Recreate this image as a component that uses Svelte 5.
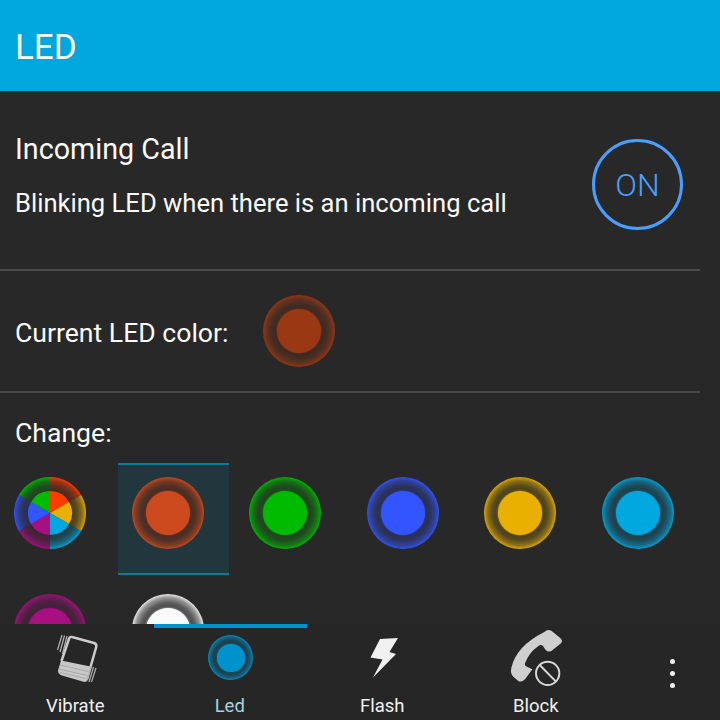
<script>
  const colors = [
    { c: '#cc4a1e', sel: true },
    { c: '#00bb00' },
    { c: '#3355ff' },
    { c: '#e9b000' },
    { c: '#00a8e0' },
    { c: '#a80f80' },
    { c: '#fafafa' }
  ];
  const wheel = ['#ff3c00', '#e9b000', '#00a8e0', '#a80f80', '#3355ff', '#00bb00'];

  function slice(i, r) {
    const a0 = ((i * 60 - 90) * Math.PI) / 180;
    const a1 = (((i + 1) * 60 - 90) * Math.PI) / 180;
    const p = (a) => `${(36 + r * Math.cos(a)).toFixed(2)} ${(36 + r * Math.sin(a)).toFixed(2)}`;
    return `M36 36L${p(a0)}A${r} ${r} 0 0 1 ${p(a1)}Z`;
  }
</script>

<div class="screen">
  <header class="title">LED</header>

  <main class="content">
    <section class="toggle-row">
      <div>
        <div class="toggle-title">Incoming Call</div>
        <div class="toggle-desc">Blinking LED when there is an incoming call</div>
      </div>
      <div class="toggle">ON</div>
    </section>
    <div class="sep"></div>

    <section class="current">
      <span>Current LED color:</span>
      <span class="led" style="--c:#9a3813"></span>
    </section>
    <div class="sep"></div>

    <div class="change">Change:</div>
    <div class="grid">
      <div class="cell">
        <svg class="wheel" width="72" height="72" viewBox="0 0 72 72">
          <defs>
            <radialGradient id="fade" gradientUnits="userSpaceOnUse" cx="36" cy="36" r="36">
              <stop offset="0.62" stop-color="#282828" stop-opacity="0.85" />
              <stop offset="0.76" stop-color="#282828" stop-opacity="0.74" />
              <stop offset="0.9" stop-color="#282828" stop-opacity="0.46" />
              <stop offset="1" stop-color="#282828" stop-opacity="0.08" />
            </radialGradient>
          </defs>
          {#each wheel as w, i}
            <path d={slice(i, 36)} fill={w} />
          {/each}
          <circle cx="36" cy="36" r="36" fill="url(#fade)" />
          {#each wheel as w, i}
            <path d={slice(i, 22)} fill={w} />
          {/each}
        </svg>
      </div>
      {#each colors as item}
        <div class="cell" class:selected={item.sel}>
          <span class="led" style="--c:{item.c}"></span>
        </div>
      {/each}
    </div>
  </main>

  <nav class="bar">
    <div class="tab">
      <svg width="50" height="66" viewBox="52 624 50 66">
        <path d="M72 637L94 643Q97 644 96.2 647L87 679.5" fill="none" stroke="#cccccc" stroke-width="2.5" />
        <path d="M72 637Q69.5 636.5 69 639L61.5 661" fill="none" stroke="#cccccc" stroke-width="2.5" />
        <path d="M61 660.5L90.5 666.5L87.5 680Q86.5 682.5 83.5 681.8L62 675.5Q58 674 58 670.5Z" fill="#c8c8c8" />
        <path d="M60 665L88.5 671.5M59 669L87.5 675.5M60 672.5L85.5 678.5" stroke="#949494" stroke-width="0.6" />
        <path d="M62 635L57.5 650M64.5 635.5L60 652M67 636L62.5 654" stroke="#b4b4b4" stroke-width="1.2" />
        <path d="M93.5 667L89 682M96 668L91.5 682M91 666.5L86.5 681" stroke="#b4b4b4" stroke-width="1.2" />
      </svg>
      <span class="label">Vibrate</span>
    </div>
    <div class="tab active">
      <span class="led tab-led" style="--c:#0092cc"></span>
      <span class="label">Led</span>
    </div>
    <div class="tab">
      <svg width="50" height="66" viewBox="359 624 50 66">
        <path d="M380 639L398 638L389.5 652L396 654L373 677.5L382.5 659.5L370.5 657.5Z" fill="#f0f0f0" />
      </svg>
      <span class="label">Flash</span>
    </div>
    <div class="tab">
      <svg width="65" height="66" viewBox="0 -6 195 198">
        <path d="M118 18Q128 8 140 15L165 35Q175 44 168 52L140 74Q130 80 122 72L114 60Q108 54 100 60Q72 80 60 112Q58 120 66 122L82 130L60 160Q50 170 40 165L25 152Q15 143 19 125Q34 60 118 18Z" fill="#cfcfcf" />
        <circle cx="128" cy="142" r="35" fill="#262626" stroke="#d6d6d6" stroke-width="6" />
        <path d="M104 117L153 167" stroke="#d6d6d6" stroke-width="6" />
      </svg>
      <span class="label">Block</span>
    </div>
    <div class="more">
      <i></i><i></i><i></i>
    </div>
  </nav>
</div>

<style>
  :global(body) {
    margin: 0;
    background: #282828;
  }

  .screen {
    width: 720px;
    height: 720px;
    display: flex;
    flex-direction: column;
    overflow: hidden;
    color: #fafafa;
    font-family: Roboto, "Liberation Sans", sans-serif;
  }

  .title {
    height: 91px;
    flex: none;
    background: #00a6de;
    font-size: 35px;
    line-height: 96px;
    padding-left: 15px;
    box-sizing: border-box;
  }

  .content {
    flex: 1;
    min-height: 0;
    overflow: hidden;
    background: #282828;
  }

  .toggle-row {
    height: 178px;
    box-sizing: border-box;
    padding: 41px 37px 0 15px;
    display: flex;
    justify-content: space-between;
    align-items: flex-start;
  }

  .toggle-title {
    font-size: 28.7px;
    line-height: 34px;
  }

  .toggle-desc {
    font-size: 25.6px;
    line-height: 30px;
    margin-top: 22px;
  }

  .toggle {
    width: 91px;
    height: 91px;
    margin-top: 7px;
    box-sizing: border-box;
    border: 3px solid #4a9eff;
    border-radius: 50%;
    color: #4a9eff;
    font-size: 32px;
    font-weight: 300;
    display: flex;
    align-items: center;
    justify-content: center;
  }

  .sep {
    width: 700px;
    height: 2px;
    background: #4a4a4a;
  }

  .current {
    height: 120px;
    box-sizing: border-box;
    padding: 3px 0 0 15px;
    display: flex;
    align-items: center;
    gap: 34px;
    font-size: 26.6px;
  }

  .current .led {
    margin-top: -3px;
  }

  .change {
    font-size: 26.6px;
    line-height: 30px;
    padding: 25px 0 0 15px;
    height: 70px;
    box-sizing: border-box;
  }

  .led {
    display: block;
    flex: none;
    position: relative;
    width: 72px;
    height: 72px;
    border-radius: 50%;
    background: radial-gradient(circle closest-side, #282828d8 0, #282828d8 62%, #282828c0 76%, #28282878 90%, #28282814 100%), var(--c);
  }

  .led::after {
    content: "";
    position: absolute;
    inset: 14px;
    border-radius: 50%;
    background: var(--c);
    box-shadow: 0 0 2px var(--c);
  }

  .grid {
    display: grid;
    grid-template-columns: repeat(6, 111px);
    column-gap: 6.6px;
    row-gap: 5px;
  }

  .cell {
    height: 112px;
    box-sizing: border-box;
    padding: 12px 0 0 14px;
    border-top: 2px solid transparent;
    border-bottom: 2px solid transparent;
  }

  .wheel {
    display: block;
  }

  .cell.selected {
    background: #22363e;
    border-color: #0a7a9e;
  }

  .bar {
    height: 96px;
    flex: none;
    display: flex;
    background: #262626;
  }

  .tab {
    width: 153.5px;
    height: 96px;
    display: flex;
    flex-direction: column;
    align-items: center;
    box-sizing: border-box;
    color: #f0f0f0;
  }

  .tab svg {
    display: block;
    flex: none;
  }

  .tab.active {
    border-top: 4px solid #0092cc;
    color: #a5d5e5;
  }

  .tab.active .label {
    margin-right: 1px;
  }

  .led.tab-led {
    width: 45px;
    height: 45px;
    margin: 7px 0 10px 1px;
  }

  .tab-led::after {
    inset: 8.5px;
  }

  .label {
    font-size: 18.5px;
    line-height: 30px;
    margin-top: 1px;
    margin-right: 3px;
  }

  .more {
    flex: 1;
    display: flex;
    flex-direction: column;
    align-items: center;
    gap: 7px;
    padding: 35px 0 0 10px;
    box-sizing: border-box;
  }

  .more i {
    width: 5px;
    height: 5px;
    border-radius: 50%;
    background: #f0f0f0;
  }
</style>
